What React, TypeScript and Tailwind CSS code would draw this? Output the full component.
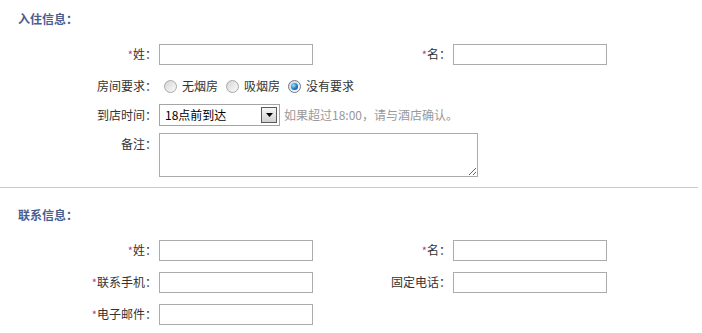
import React from "react";

const font = { fontFamily: '"Noto Sans CJK SC", "Noto Sans", sans-serif' };

function Star() {
  return <span className="text-[#b0447a] text-[11px]">*</span>;
}

function Field({ wide }: { wide?: boolean }) {
  return (
    <input
      type="text"
      className={
        "block h-[21px] border border-[#ababab] bg-white outline-none " +
        (wide ? "w-[320px]" : "w-[154px]")
      }
    />
  );
}

function Label({ star, text, w }: { star?: boolean; text: string; w: string }) {
  return (
    <div className={w + " shrink-0 text-right pr-[2px] text-[12px] text-[#333] leading-[16px] whitespace-nowrap"}>
      {star ? <Star /> : null}
      {text}
    </div>
  );
}

function Radio({ checked }: { checked?: boolean }) {
  return (
    <span
      className={
        "relative inline-flex w-[13px] h-[13px] rounded-full items-center justify-center shrink-0 border " +
        (checked
          ? "border-[#6e7a86] bg-gradient-to-br from-[#cfd6dd] to-[#ffffff]"
          : "border-[#a8a8a8] bg-gradient-to-br from-[#d6d6d6] to-[#fbfbfb]")
      }
    >
      {checked ? (
        <span className="w-[7px] h-[7px] rounded-full bg-[radial-gradient(circle_at_35%_35%,#9fe0ff,#1a78c6_55%,#0a3b70)]" />
      ) : null}
    </span>
  );
}

function Row({ children, h = "h-[32px]" }: { children: React.ReactNode; h?: string }) {
  return <div className={"flex items-center " + h}>{children}</div>;
}

export default function App() {
  return (
    <div className="w-[702px] bg-white text-[12px] text-[#333]" style={font}>
      <div className="pl-[18px] pt-[10px] h-[28px] leading-[18px] font-bold text-[#4b5c8e] text-[12px]">
        入住信息：
      </div>
      <div className="mt-[10px]">
        <Row>
          <Label star text="姓：" w="w-[159px]" />
          <Field />
          <Label star text="名：" w="w-[140px]" />
          <Field />
        </Row>
        <Row>
          <Label text="房间要求：" w="w-[159px]" />
          <div className="flex items-center text-[12px] leading-[16px] pl-[5px]">
            <Radio />
            <span className="ml-[5px] mr-[8px]">无烟房</span>
            <Radio />
            <span className="ml-[5px] mr-[8px]">吸烟房</span>
            <Radio checked />
            <span className="ml-[5px]">没有要求</span>
          </div>
        </Row>
        <Row h="h-[26px]">
          <Label text="到店时间：" w="w-[159px]" />
          <div className="flex items-center w-[121px] h-[22px] border border-[#a5a5a5] bg-white pl-[5px] pr-[2px]">
            <span className="flex-1 text-[12px] leading-[16px] text-black">18点前到达</span>
            <span className="flex items-center justify-center w-[16px] h-[16px] border border-[#5a5a5a] bg-gradient-to-b from-[#f6f6f6] to-[#d0d0d0]">
              <svg width="7" height="4" viewBox="0 0 7 4">
                <polygon points="0,0 7,0 3.5,4" fill="#000" />
              </svg>
            </span>
          </div>
          <span className="ml-[4px] text-[#999] text-[12px] leading-[16px]">如果超过18:00，请与酒店确认。</span>
        </Row>
        <div className="flex items-start mt-[5px]">
          <Label text="备注：" w="w-[159px] pt-[3px]" />
          <textarea className="block w-[319px] h-[44px] border border-[#ababab] bg-white outline-none" />
        </div>
      </div>
      <div className="mt-[10px] w-[698px] h-px bg-[#c6cbd6]" />
      <div className="pl-[18px] mt-[18px] h-[18px] leading-[18px] font-bold text-[#4b5c8e] text-[12px]">
        联系信息：
      </div>
      <div className="mt-[10px]">
        <Row>
          <Label star text="姓：" w="w-[159px]" />
          <Field />
          <Label star text="名：" w="w-[140px]" />
          <Field />
        </Row>
        <Row>
          <Label star text="联系手机：" w="w-[159px]" />
          <Field />
          <Label text="固定电话：" w="w-[140px]" />
          <Field />
        </Row>
        <Row>
          <Label star text="电子邮件：" w="w-[159px]" />
          <Field />
        </Row>
      </div>
    </div>
  );
}
